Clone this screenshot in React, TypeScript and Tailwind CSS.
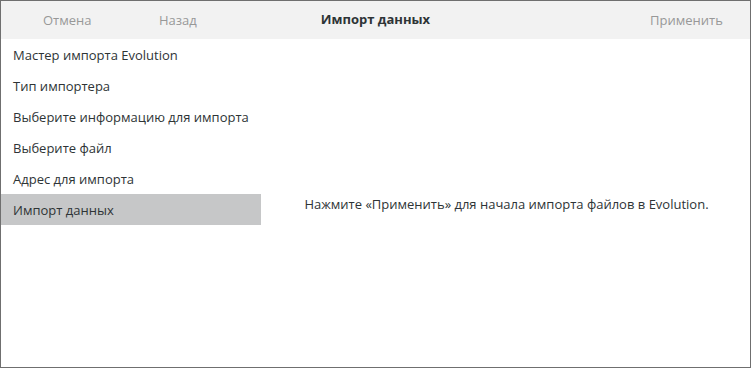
import React from 'react'

const steps = [
  'Мастер импорта Evolution',
  'Тип импортера',
  'Выберите информацию для импорта',
  'Выберите файл',
  'Адрес для импорта',
  'Импорт данных',
]

export default function App() {
  const active = steps.length - 1
  return (
    <div
      className="w-[751px] h-[368px] border border-[#6f6f6f] bg-white flex flex-col text-[13px] text-[#2e3436]"
      style={{ fontFamily: '"Open Sans", "Noto Sans", sans-serif' }}
    >
      {/* Header bar */}
      <div className="h-[38px] shrink-0 bg-[#f2f2f2] relative flex items-center">
        <div className="text-[#989898] absolute left-[42px] top-[10px]">Отмена</div>
        <div className="text-[#989898] absolute left-[158px] top-[10px]">Назад</div>
        <div className="w-full text-center font-bold">Импорт данных</div>
        <div className="text-[#989898] absolute left-[649px] top-[10px]">Применить</div>
      </div>

      <div className="flex flex-1">
        {/* Step list */}
        <div className="w-[260px] shrink-0">
          {steps.map((s, i) => (
            <div
              key={s}
              className={`h-[31px] flex items-center pl-[12px] pt-[2px] ${i === active ? 'bg-[#c6c7c8]' : ''}`}
            >
              {s}
            </div>
          ))}
        </div>

        {/* Content */}
        <div className="flex-1 flex items-center justify-center pt-[4px] pl-[2px]">
          Нажмите «Применить» для начала импорта файлов в Evolution.
        </div>
      </div>
    </div>
  )
}
